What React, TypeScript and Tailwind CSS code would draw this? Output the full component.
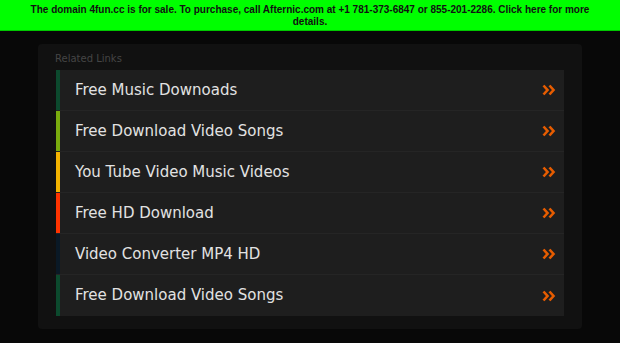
import React from 'react';

interface LinkItem {
  label: string;
  bar: string;
}

const links: LinkItem[] = [
  { label: 'Free Music Downoads', bar: 'bg-[#0c4a2e]' },
  { label: 'Free Download Video Songs', bar: 'bg-[#7aab0e]' },
  { label: 'You Tube Video Music Videos', bar: 'bg-[#f4b300]' },
  { label: 'Free HD Download', bar: 'bg-[#ff3300]' },
  { label: 'Video Converter MP4 HD', bar: 'bg-[#0a1926]' },
  { label: 'Free Download Video Songs', bar: 'bg-[#0c4a2e]' },
];

const DoubleChevron: React.FC = () => (
  <svg width="14" height="12" viewBox="0 0 14 12" fill="none">
    <path d="M1.5 1.5 L5.5 6 L1.5 10.5" stroke="#e65c00" strokeWidth="2.6" strokeLinejoin="miter" />
    <path d="M7.5 1.5 L11.5 6 L7.5 10.5" stroke="#e65c00" strokeWidth="2.6" strokeLinejoin="miter" />
  </svg>
);

const App: React.FC = () => {
  return (
    <div className="min-h-[343px] bg-[#080808] font-['DejaVu_Sans',sans-serif]">
      {/* Sale banner */}
      <div className="h-[31px] bg-[#00ff00] border-b border-[#00c800] pt-[4px] px-[28px] text-center text-[10px] leading-[12px] font-bold text-[#111] font-['Liberation_Sans',Arial,sans-serif]">
        The domain 4fun.cc is for sale. To purchase, call Afternic.com at +1 781-373-6847 or 855-201-2286. Click here for more details.
      </div>

      <div className="px-[38px] pt-[13px]">
        <div className="bg-[#111111] rounded-[4px] px-[18px] pt-[9px] pb-[13px]">
          <h3 className="text-[10px] leading-[12px] text-[#454545] -ml-[1px] mb-[5px]">Related Links</h3>
          <ul>
            {links.map((link, index) => (
              <li
                key={index}
                className="flex h-[41px] bg-[#1e1e1e] border-b border-[#252525] last:border-b-0"
              >
                <div className={`w-[4px] ${link.bar}`}></div>
                <a href="#" className="flex flex-1 items-center justify-between pl-[15px] pr-[8px]">
                  <span className="text-[15px] text-[#e2e2e2]">{link.label}</span>
                  <DoubleChevron />
                </a>
              </li>
            ))}
          </ul>
        </div>
      </div>
    </div>
  );
};

export default App;
